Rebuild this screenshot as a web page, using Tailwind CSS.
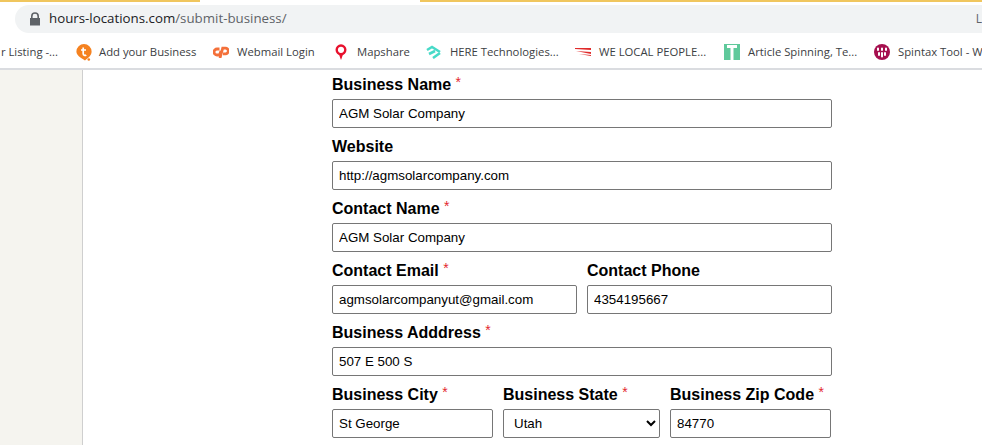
<!DOCTYPE html>
<html lang="en">
<head>
    <meta charset="UTF-8">
    <title>Submit Business</title>
    <script src="https://cdn.jsdelivr.net/npm/@tailwindcss/browser@4"></script>
</head>
<body class="w-[982px] h-[445px] overflow-hidden bg-white font-['Liberation_Sans',sans-serif]">

    <!-- browser chrome -->
    <header class="h-[70px] border-b-2 border-[#dadce0] bg-white font-['Open_Sans',sans-serif] text-[#3c4043] overflow-hidden">
        <div class="flex h-[2px] justify-between">
            <div class="w-[200px] bg-[#f0c65e]"></div>
            <div class="w-[562px] bg-[#f0c65e]"></div>
        </div>
        <div class="pl-[15px] pt-[3px]">
            <div class="h-[28px] rounded-l-full bg-[#f1f3f4] flex items-center pl-[14px] text-[13.3px] relative">
                <svg class="w-[12px] h-[14px] mr-[8px]" viewBox="0 0 12 14"><path fill="#5f6368" d="M2 6V4.2a4 4 0 0 1 8 0V6h1v7.5H1V6zm1.600 0h4.800V4.200a2.400 2.400 0 0 0-4.800 0z"/></svg>
                <span class="text-[#202124]">hours-locations.com</span><span class="text-[#5f6368]">/submit-business/</span>
                <span class="absolute right-0 text-[12px] text-[#5f6368]">L</span>
            </div>
        </div>
        <nav class="flex items-center h-[28px] mt-[5px] text-[11.3px] whitespace-nowrap">
            <span class="w-[76px] shrink-0 overflow-hidden flex justify-end pr-[18px]">r Listing -...</span>

            <span class="w-[137px] shrink-0 flex items-center gap-[7px]">
                <svg class="w-[16px] h-[17px]" viewBox="0 0 16 17"><path fill="#f58220" d="M8 0a7.600 7.600 0 0 1 7.600 7.600c0 3.600-2.600 5.900-6.600 8.900C4 13.500.4 11.200.4 7.600A7.600 7.600 0 0 1 8 0z"/><circle cx="12.800" cy="15.500" r="1.300" fill="#f58220"/><path fill="none" stroke="#fff" stroke-width="1.700" d="M7.200 3.500v6.200a1.800 1.800 0 0 0 3 1.300M5 6h5"/></svg>
                <span>Add your Business</span>
            </span>
            <span class="w-[120px] shrink-0 flex items-center gap-[8px]">
                <svg class="w-[16px] h-[12px]" viewBox="0 0 16 12"><path fill="none" stroke="#f4703a" stroke-width="2.800" d="M6.500 3H4a3 3 0 0 0 0 6h2.500l1.500-4M7 12l2.700-9.800H12.500a2.700 2.700 0 0 1 0 5.600H10"/></svg>
                <span>Webmail Login</span>
            </span>
            <span class="w-[93px] shrink-0 flex items-center gap-[8px]">
                <svg class="w-[16px] h-[16px]" viewBox="0 0 16 16"><path fill="none" stroke="#e8112d" stroke-width="2.400" d="M8 1.500a4.300 4.300 0 1 1 0 8.600a4.300 4.300 0 0 1 0-8.600z"/><path fill="#e8112d" d="M6 10.500h4L8 16z"/></svg>
                <span>Mapshare</span>
            </span>
            <span class="w-[149px] shrink-0 flex items-center gap-[8px]">
                <svg class="w-[16px] h-[14px]" viewBox="0 0 16 14"><path fill="none" stroke="#48dac8" stroke-width="2.600" d="M1 5l5-3 8 5M3 9l6-3M7 13l7-5"/></svg>
                <span>HERE Technologies...</span>
            </span>
            <span class="w-[149px] shrink-0 flex items-center gap-[8px]">
                <svg class="w-[16px] h-[8px]" viewBox="0 0 16 8"><path fill="#e02b2b" d="M0 0h16v2L0 1zM1 3l15 1v2zM4 6l12 1v1z"/></svg>
                <span>WE LOCAL PEOPLE...</span>
            </span>
            <span class="w-[150px] shrink-0 flex items-center gap-[8px]">
                <span class="w-[16px] h-[16px] bg-[#5fc99b] flex justify-center">
                    <svg class="w-[16px] h-[16px]" viewBox="0 0 16 16"><path fill="#fff" d="M3 1h10v3H9.500v12h-3V4H3z"/></svg>
                </span>
                <span>Article Spinning, Te...</span>
            </span>
            <span class="shrink-0 flex items-center gap-[8px]">
                <svg class="w-[16px] h-[16px]" viewBox="0 0 16 16"><circle cx="8" cy="8" r="8" fill="#a6104f"/><path fill="none" stroke="#fff" stroke-width="2" stroke-linecap="round" d="M4 4.500v1.500M8 4.500v1.500M12 4.500v1.500M5 9v2M8 9v3.500M11 9v2"/></svg>
                <span>Spintax Tool - W</span>
            </span>
        </nav>
    </header>

    <div class="flex h-[375px]">
        <aside class="w-[83px] shrink-0 bg-[#f5f4ef] border-r border-[#cfcfcf]"></aside>

        <form class="w-[500px] ml-[249px] pt-[3px] flex flex-col gap-[7px] text-black" autocomplete="off">
            <div>
                <label class="block h-[26px] leading-[23px] text-[16px] font-bold">Business Name <span class="text-[#e3262e] font-normal text-[14px] leading-none align-[3px]">*</span></label>
                <input type="text" value="AGM Solar Company" class="block w-full h-[29px] px-[6px] text-[13.33px] border border-[#767676] rounded-[2px]">
            </div>
            <div>
                <label class="block h-[26px] leading-[23px] text-[16px] font-bold">Website</label>
                <input type="text" value="http://agmsolarcompany.com" class="block w-full h-[29px] px-[6px] text-[13.33px] border border-[#767676] rounded-[2px]">
            </div>
            <div>
                <label class="block h-[26px] leading-[23px] text-[16px] font-bold">Contact Name <span class="text-[#e3262e] font-normal text-[14px] leading-none align-[3px]">*</span></label>
                <input type="text" value="AGM Solar Company" class="block w-full h-[29px] px-[6px] text-[13.33px] border border-[#767676] rounded-[2px]">
            </div>
            <div class="flex gap-[10px]">
                <div class="w-[245px]">
                    <label class="block h-[26px] leading-[23px] text-[16px] font-bold">Contact Email <span class="text-[#e3262e] font-normal text-[14px] leading-none align-[3px]">*</span></label>
                    <input type="text" value="agmsolarcompanyut@gmail.com" class="block w-full h-[29px] px-[6px] text-[13.33px] border border-[#767676] rounded-[2px]">
                </div>
                <div class="w-[245px]">
                    <label class="block h-[26px] leading-[23px] text-[16px] font-bold">Contact Phone</label>
                    <input type="text" value="4354195667" class="block w-full h-[29px] px-[6px] text-[13.33px] border border-[#767676] rounded-[2px]">
                </div>
            </div>
            <div>
                <label class="block h-[26px] leading-[23px] text-[16px] font-bold">Business Adddress <span class="text-[#e3262e] font-normal text-[14px] leading-none align-[3px]">*</span></label>
                <input type="text" value="507 E 500 S" class="block w-full h-[29px] px-[6px] text-[13.33px] border border-[#767676] rounded-[2px]">
            </div>
            <div class="flex gap-[10px]">
                <div class="w-[161px]">
                    <label class="block h-[26px] leading-[23px] text-[16px] font-bold">Business City <span class="text-[#e3262e] font-normal text-[14px] leading-none align-[3px]">*</span></label>
                    <input type="text" value="St George" class="block w-full h-[29px] px-[6px] text-[13.33px] border border-[#767676] rounded-[2px]">
                </div>
                <div class="w-[157px]">
                    <label class="block h-[26px] leading-[23px] text-[16px] font-bold">Business State <span class="text-[#e3262e] font-normal text-[14px] leading-none align-[3px]">*</span></label>
                    <select class="block w-full h-[29px] pl-[6px] text-[13.33px] border border-[#767676] rounded-[2px]">
                        <option>Utah</option>
                    </select>
                </div>
                <div class="w-[161px]">
                    <label class="block h-[26px] leading-[23px] text-[16px] font-bold">Business Zip Code <span class="text-[#e3262e] font-normal text-[14px] leading-none align-[3px]">*</span></label>
                    <input type="text" value="84770" class="block w-full h-[29px] px-[6px] text-[13.33px] border border-[#767676] rounded-[2px]">
                </div>
            </div>
        </form>
    </div>

</body>
</html>
